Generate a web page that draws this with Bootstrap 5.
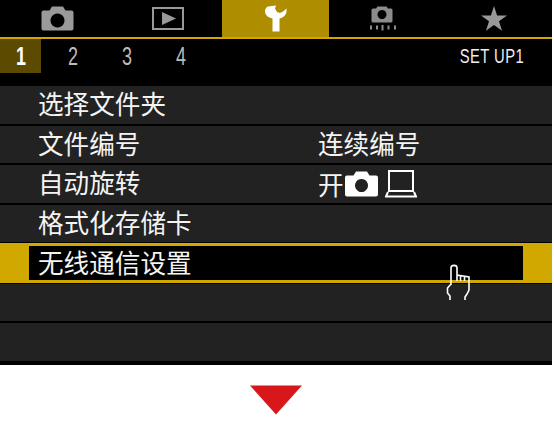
<!DOCTYPE html>
<html lang="zh">
<head>
<meta charset="UTF-8">
<title>SET UP1</title>
<link href="https://cdn.jsdelivr.net/npm/bootstrap@5.3.3/dist/css/bootstrap.min.css" rel="stylesheet">
<style>
body { background: #fff; overflow: hidden; }
.screen { width: 552px; height: 365px; background: #000; position: relative; }
.tabbar { display: grid; grid-template-columns: 114px 108px 107px 107px 116px; height: 39px; border-bottom: 2px solid #d0a800; }
.tabcell { display: flex; align-items: center; justify-content: center; }
.tabcell.on { background: #af8d00; }
.numbar { height: 34px; font-family: "Liberation Sans", sans-serif; color: #bbb; }
.numcell { width: 54px; text-align: center; font-size: 25px; line-height: 34px; }
.numcell span { display: inline-block; transform: scaleX(0.72); }
.numcell.on { width: 41px; margin-right: 5px; background: #5c4a00; color: #fff; font-weight: 700; }
.pagename { margin-left: auto; margin-right: 28px; font-size: 20px; color: #eee; letter-spacing: 0.6px; line-height: 34px; transform: scaleX(0.74); transform-origin: right center; }
.menulist { margin-top: 13px; font-family: "Noto Sans CJK SC", "Liberation Sans", sans-serif; font-size: 25.6px; color: #f4f4f4; }
.menurow { height: 37.5px; margin-bottom: 2px; background: #222; padding-left: 38px; padding-bottom: 3px; line-height: 32px; display: flex; align-items: center; }
.rowlabel { width: 280px; }
.onmark { margin-top: 3px; gap: 1px; }
.pcmark { margin-left: 6px; }
.menurow.sel { height: 39.5px; margin-top: -1px; margin-bottom: 1px; background: #000; padding: 0 0 2px 9px; border-top: 3.5px solid #d0a800; border-bottom: 3.5px solid #d0a800; border-left: 29px solid #d0a800; border-right: 29px solid #d0a800; }
.cursor { position: absolute; left: 446px; top: 264px; }
.lowarea { width: 552px; padding-top: 20px; }
</style>
</head>
<body>
<div class="screen">
  <div class="tabbar">
    <div class="tabcell">
      <svg width="33" height="25" viewBox="0 0 33 25"><path fill="#9a9a9a" fill-rule="evenodd" d="M11 0.500h11l2.500 4h6a2 2 0 0 1 2 2v16a2 2 0 0 1-2 2h-28a2 2 0 0 1-2-2v-16a2 2 0 0 1 2-2h6zM16.500 7.500a7 7 0 1 0 0.010 0z"/></svg>
    </div>
    <div class="tabcell">
      <svg width="32" height="23" viewBox="0 0 32 23"><rect x="1" y="1" width="30" height="21" fill="none" stroke="#999" stroke-width="2"/><path fill="#999" d="M10 5l14 6.500-14 6.500z"/></svg>
    </div>
    <div class="tabcell on">
      <svg width="22" height="27" viewBox="0 0 22 27"><path fill="#fff" d="M3 1.500L11 0.500 10 3.500 12 7 15 8 18 6.500 21.500 3.500V7C20.500 11 17.500 13 14.500 13.500V26.500H7.500V13.500C3 12.500 0 10 0 6 0 4 1 2.500 3 1.500z"/></svg>
    </div>
    <div class="tabcell">
      <svg width="28" height="25" viewBox="0 0 28 25"><path fill="#8c8c8c" fill-rule="evenodd" d="M8.500 0.500h9l1.500 2h3a1.500 1.500 0 0 1 1.500 1.500v11a1.500 1.500 0 0 1-1.500 1.500h-18a1.500 1.500 0 0 1-1.500-1.500v-11a1.500 1.500 0 0 1 1.500-1.500h3zM13 4a4.500 4.500 0 1 0 0.010 0z"/><path fill="#8c8c8c" d="M1 19.500h2v4h-2zM7 19.500h2v4h-2zM12.500 19h2v5.500h-2zM18.500 19.500h2v4h-2zM25 19.500h2v4h-2z"/></svg>
    </div>
    <div class="tabcell">
      <svg width="26" height="25" viewBox="0 0 26 25"><path fill="#999" d="M13 0l3.100 9.400h9.900l-8 5.800 3 9.500-8-5.800-8 5.800 3-9.500-8-5.800h9.900z"/></svg>
    </div>
  </div>
  <div class="numbar d-flex">
    <div class="numcell on"><span>1</span></div>
    <div class="numcell"><span>2</span></div>
    <div class="numcell"><span>3</span></div>
    <div class="numcell"><span>4</span></div>
    <div class="pagename">SET UP1</div>
  </div>
  <div class="menulist">
    <div class="menurow"><span class="rowlabel">选择文件夹</span></div>
    <div class="menurow"><span class="rowlabel">文件编号</span><span>连续编号</span></div>
    <div class="menurow">
      <span class="rowlabel">自动旋转</span>
      <span class="onmark d-flex align-items-center">开
        <svg width="33" height="26" viewBox="0 0 33 26"><path fill="#fff" fill-rule="evenodd" d="M11 0.500h11l2.500 4h6.500a2 2 0 0 1 2 2v17a2 2 0 0 1-2 2h-29a2 2 0 0 1-2-2v-17a2 2 0 0 1 2-2h6.500zM16.500 8a6.500 6.500 0 1 0 0.010 0z"/></svg>
        <svg class="pcmark" width="32" height="28" viewBox="0 0 32 28"><path fill="none" stroke="#fff" stroke-width="2" d="M4 1h24v20h-24z"/><path fill="none" stroke="#fff" stroke-width="2" d="M3 22l-2 4.500h30l-2-4.500"/></svg>
      </span>
    </div>
    <div class="menurow"><span class="rowlabel">格式化存储卡</span></div>
    <div class="menurow sel"><span>无线通信设置</span></div>
    <div class="menurow"></div>
    <div class="menurow"></div>
  </div>
  <svg class="cursor" width="25" height="36" viewBox="0 0 25 36"><path fill="none" stroke="#fff" stroke-width="1.600" d="M5 21V4C5 0.500 11 0.500 11 4V11L23 13V26L21 30 19 33V36M5 20L1.500 24V29L4 32V36M11 11V17M14.500 12V17M18.500 12.500V17"/></svg>
</div>
<div class="lowarea d-flex justify-content-center">
  <svg width="52" height="30" viewBox="0 0 52 30"><path fill="#d7171a" d="M0 0.500h52l-26 29z"/></svg>
</div>
<script src="https://cdn.jsdelivr.net/npm/bootstrap@5.3.3/dist/js/bootstrap.bundle.min.js"></script>
</body>
</html>
